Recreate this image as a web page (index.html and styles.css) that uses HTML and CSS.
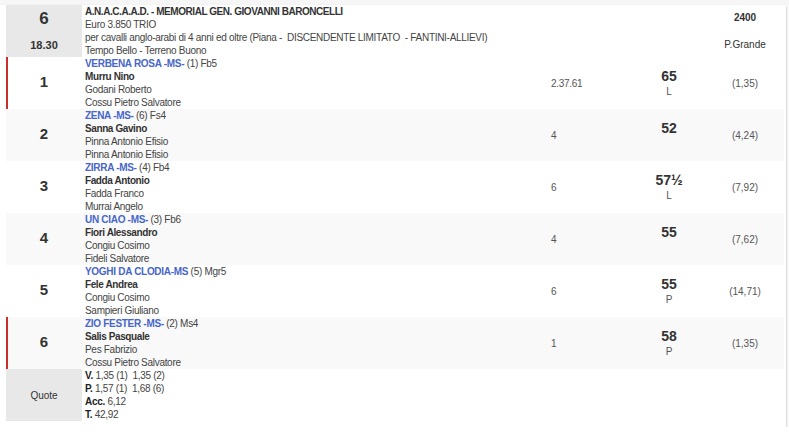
FILE: index.html
```html
<!DOCTYPE html>
<html lang="it">
<head>
    <meta charset="UTF-8">
    <title>Corsa 6</title>
    <link rel="stylesheet" href="styles.css">
</head>
<body>
    <div class="topbar"></div>
    <div class="box">
        <table class="race">
            <colgroup>
                <col class="c-num">
                <col class="c-info">
                <col class="c-time">
                <col class="c-weight">
                <col class="c-odds">
            </colgroup>
            <tr class="head">
                <td class="num">
                    <div class="big">6</div>
                    <div class="hour">18.30</div>
                </td>
                <td class="info">
                    <div class="title">A.N.A.C.A.A.D. - MEMORIAL GEN. GIOVANNI BARONCELLI</div>
                    <div>Euro 3.850 TRIO</div>
                    <div>per cavalli anglo-arabi di 4 anni ed oltre (Piana -&nbsp; DISCENDENTE LIMITATO&nbsp; - FANTINI-ALLIEVI)</div>
                    <div>Tempo Bello - Terreno Buono</div>
                </td>
                <td></td>
                <td></td>
                <td class="odds">
                    <div class="dist">2400</div>
                    <div class="track">P.Grande</div>
                </td>
            </tr>
            <tr class="mark">
                <td class="num"><span class="pos">1</span></td>
                <td class="info">
                    <div><span class="horse">VERBENA ROSA -MS-</span> (1) Fb5</div>
                    <div class="jockey">Murru Nino</div>
                    <div>Godani Roberto</div>
                    <div>Cossu Pietro Salvatore</div>
                </td>
                <td class="time">2.37.61</td>
                <td class="weight"><div class="kg">65</div><div>L</div></td>
                <td class="odds">(1,35)</td>
            </tr>
            <tr class="alt">
                <td class="num"><span class="pos">2</span></td>
                <td class="info">
                    <div><span class="horse">ZENA -MS-</span> (6) Fs4</div>
                    <div class="jockey">Sanna Gavino</div>
                    <div>Pinna Antonio Efisio</div>
                    <div>Pinna Antonio Efisio</div>
                </td>
                <td class="time">4</td>
                <td class="weight"><div class="kg">52</div><div>&nbsp;</div></td>
                <td class="odds">(4,24)</td>
            </tr>
            <tr>
                <td class="num"><span class="pos">3</span></td>
                <td class="info">
                    <div><span class="horse">ZIRRA -MS-</span> (4) Fb4</div>
                    <div class="jockey">Fadda Antonio</div>
                    <div>Fadda Franco</div>
                    <div>Murrai Angelo</div>
                </td>
                <td class="time">6</td>
                <td class="weight"><div class="kg">57½</div><div>L</div></td>
                <td class="odds">(7,92)</td>
            </tr>
            <tr class="alt">
                <td class="num"><span class="pos">4</span></td>
                <td class="info">
                    <div><span class="horse">UN CIAO -MS-</span> (3) Fb6</div>
                    <div class="jockey">Fiori Alessandro</div>
                    <div>Congiu Cosimo</div>
                    <div>Fideli Salvatore</div>
                </td>
                <td class="time">4</td>
                <td class="weight"><div class="kg">55</div><div>&nbsp;</div></td>
                <td class="odds">(7,62)</td>
            </tr>
            <tr>
                <td class="num"><span class="pos">5</span></td>
                <td class="info">
                    <div><span class="horse">YOGHI DA CLODIA-MS</span> (5) Mgr5</div>
                    <div class="jockey">Fele Andrea</div>
                    <div>Congiu Cosimo</div>
                    <div>Sampieri Giuliano</div>
                </td>
                <td class="time">6</td>
                <td class="weight"><div class="kg">55</div><div>P</div></td>
                <td class="odds">(14,71)</td>
            </tr>
            <tr class="alt mark">
                <td class="num"><span class="pos">6</span></td>
                <td class="info">
                    <div><span class="horse">ZIO FESTER -MS-</span> (2) Ms4</div>
                    <div class="jockey">Salis Pasquale</div>
                    <div>Pes Fabrizio</div>
                    <div>Cossu Pietro Salvatore</div>
                </td>
                <td class="time">1</td>
                <td class="weight"><div class="kg">58</div><div>P</div></td>
                <td class="odds">(1,35)</td>
            </tr>
            <tr class="quote">
                <td class="num">Quote</td>
                <td class="info">
                    <div><b>V.</b> 1,35 (1)&nbsp; 1,35 (2)</div>
                    <div><b>P.</b> 1,57 (1)&nbsp; 1,68 (6)</div>
                    <div><b>Acc.</b> 6,12</div>
                    <div><b>T.</b> 42,92</div>
                </td>
                <td></td>
                <td></td>
                <td></td>
            </tr>
        </table>
    </div>
</body>
</html>
```

FILE: styles.css
```css
body {
    margin: 0;
    font-family: "Liberation Sans", Arial, sans-serif;
    font-size: 10px;
    line-height: 13px;
    letter-spacing: -0.3px;
    color: #444;
    background: #fff;
}
.topbar {
    height: 5px;
    background: #f6f6f6;
}
.box {
    width: 786px;
    padding: 0 0 6px 0;
    box-shadow: 1px 1px 2px rgba(0, 0, 0, 0.18);
}
.race {
    margin-left: 6px;
    width: 778px;
    border-collapse: collapse;
    table-layout: fixed;
}
.c-num { width: 76px; }
.c-time { width: 84px; }
.c-weight { width: 74px; }
.c-odds { width: 78px; }
.race td {
    padding: 0 3px;
    vertical-align: middle;
}
.race tr {
    height: 52px;
}
.race tr.alt {
    background: #f9f9f9;
}
.race tr.mark td:first-child {
    box-shadow: inset 2px 0 0 #c9302c;
}
.race td.num {
    text-align: center;
    color: #333;
    letter-spacing: 0;
}
.head td.num, .quote td.num {
    background: #e8e8e8;
}
.big {
    font-size: 17px;
    font-weight: bold;
    line-height: 20px;
    padding-bottom: 8px;
    position: relative;
    top: -2px;
}
.hour {
    font-weight: bold;
    font-size: 11px;
}
.pos {
    font-size: 15px;
    font-weight: bold;
    position: relative;
    top: -1px;
}
.title {
    font-weight: bold;
    color: #333;
    letter-spacing: -0.45px;
}
.race td.info {
    vertical-align: top;
}
.horse {
    color: #4766c9;
    font-weight: bold;
    letter-spacing: -0.3px;
}
.jockey {
    font-weight: bold;
    color: #333;
    letter-spacing: -0.4px;
}
.time {
    color: #555;
}
.weight {
    text-align: center;
    color: #555;
}
.race td.weight {
    vertical-align: top;
    padding-top: 11px;
}
.kg {
    font-size: 14px;
    font-weight: bold;
    line-height: 17px;
    color: #333;
    letter-spacing: 0;
}
.odds {
    text-align: center;
    color: #555;
    letter-spacing: 0;
}
.dist {
    font-size: 10px;
    font-weight: bold;
    color: #333;
    padding-bottom: 14px;
}
.track {
    color: #333;
}
.quote b {
    color: #222;
}
```
